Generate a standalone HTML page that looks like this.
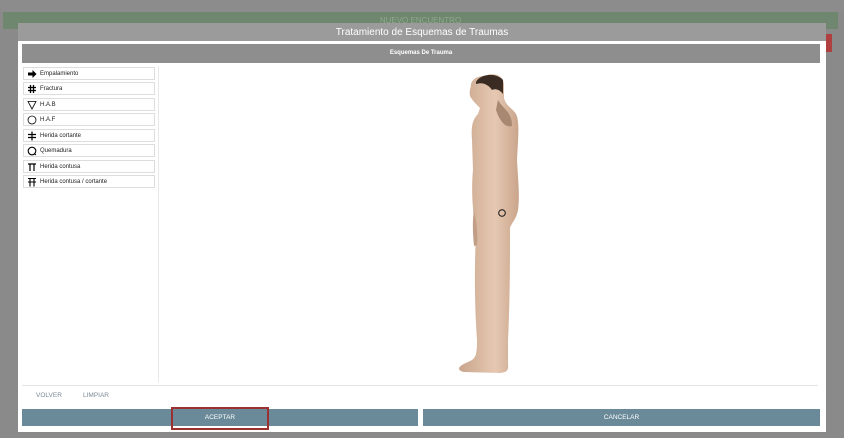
<!DOCTYPE html>
<html><head><meta charset="utf-8"><style>
*{margin:0;padding:0;box-sizing:border-box}
body{width:844px;height:438px;overflow:hidden;background:#8a8a8a;font-family:"Liberation Sans",sans-serif;position:relative}
.abs{position:absolute}
.item{position:absolute;left:23px;width:132px;height:13px;border:1px solid #ddd;background:#fff;font-size:6px;color:#222;display:flex;align-items:center;padding-left:16px}
.item svg{position:absolute;left:3px;top:1px}
.btn{position:absolute;top:409px;height:17px;background:#6a8a99;color:#fff;font-size:6.5px;text-align:center;line-height:17px}
</style></head><body>
<div class="abs" style="left:0;top:0;width:844px;height:12px;background:#8c8c8c"></div>
<div class="abs" style="left:3px;top:12px;width:835px;height:17px;background:#6e876e;color:#8ea88e;font-size:8px;text-align:center;line-height:17px">NUEVO ENCUENTRO</div>
<div class="abs" style="left:826px;top:34px;width:6px;height:18px;background:#b04040"></div>
<div class="abs" style="left:18px;top:23px;width:808px;height:409px;background:#fff"></div>
<div class="abs" style="left:18px;top:23px;width:808px;height:18px;background:#9b9b9b;color:#fff;font-size:10px;text-align:center;line-height:19px">Tratamiento de Esquemas de Traumas</div>
<div class="abs" style="left:22px;top:44px;width:798px;height:19px;background:#8e8e8e;color:#fff;font-size:6px;font-weight:bold;text-align:center;line-height:19px">Esquemas De Trauma</div>
<div class="abs" style="left:158px;top:66px;width:1px;height:316px;background:#e8e8e8"></div>
<div class="abs" style="left:22px;top:385px;width:796px;height:1px;background:#e4e4e4"></div>
<div class="item" style="top:67px"><svg width="10" height="10"><path d="M1 3.5h4.5V1L9.5 5 5.5 9V6.5H1z" fill="#000"/></svg>Empalamiento</div>
<div class="item" style="top:82px"><svg width="10" height="10"><path d="M3.5 1v8M6.5 1v8M1 3.5h8M1 6.5h8" stroke="#000" stroke-width="1.3"/></svg>Fractura</div>
<div class="item" style="top:98px"><svg width="10" height="10"><path d="M1 1.5h8L5 9z" fill="none" stroke="#000" stroke-width=".8"/></svg>H.A.B</div>
<div class="item" style="top:113px"><svg width="10" height="10"><circle cx="5" cy="5" r="4" fill="none" stroke="#000" stroke-width=".8"/></svg>H.A.F</div>
<div class="item" style="top:129px"><svg width="10" height="10"><path d="M5 .5v9M1 3.5h8M1 6.5h8" stroke="#000" stroke-width="1.2"/></svg>Herida cortante</div>
<div class="item" style="top:144px"><svg width="10" height="10"><circle cx="5" cy="5" r="3.8" fill="none" stroke="#000" stroke-width="1.1"/><path d="M7 7.5l2 1.5" stroke="#000"/></svg>Quemadura</div>
<div class="item" style="top:160px"><svg width="10" height="10"><path d="M1 2h8M3 2v7M7 2v7" stroke="#000" stroke-width="1.2"/></svg>Herida contusa</div>
<div class="item" style="top:175px"><svg width="10" height="10"><path d="M1 1.5h8M1 5h8M3 1.5v8M7 1.5v8" stroke="#000" stroke-width="1.1"/></svg>Herida contusa / cortante</div>
<svg class="abs" style="left:440px;top:70px" width="100" height="310">
<defs><linearGradient id="g" x1="0" x2="1"><stop offset="0" stop-color="#c9a58c"/><stop offset=".6" stop-color="#e6c8b2"/><stop offset="1" stop-color="#c9a48b"/></linearGradient></defs>
<path fill="url(#g)" d="M45 6 C52 2 63 4 64 14 L64 28 C66 36 72 38 76 44 C80 52 78 70 77 90 C78 110 80 125 78 140 C76 150 72 152 70 158 C70 190 70 230 68 270 L68 290 C68 298 70 302 60 303 L24 302 C16 300 18 296 28 292 C36 289 37 285 37 270 C35 240 34 210 36 160 L34 148 C33 140 31 120 33 100 L32 70 C31 58 32 50 38 44 L40 38 C36 34 32 30 30 26 C29 20 31 18 31 14 C33 8 38 6 45 6Z"/>
<path fill="#3a2c22" d="M36 12 C40 4 56 2 63 10 L63 24 C60 20 56 18 52 20 C48 14 42 12 36 14Z"/>
<path fill="#a88870" d="M58 30 C64 40 72 42 72 56 C66 58 60 52 56 40Z"/>
<path fill="#c29e86" d="M34 140 C36 150 38 160 37 175 L34 176 C33 165 32 152 34 140Z"/>
<circle cx="62" cy="143" r="3.3" fill="none" stroke="#111" stroke-width="1"/>
</svg>
<div class="abs" style="left:36px;top:392px;font-size:6.5px;color:#7a8a96">VOLVER</div>
<div class="abs" style="left:83px;top:392px;font-size:6.5px;color:#7a8a96">LIMPIAR</div>
<div class="btn" style="left:22px;width:396px">ACEPTAR</div>
<div class="btn" style="left:423px;width:397px">CANCELAR</div>
<div class="abs" style="left:171px;top:407px;width:98px;height:23px;border:2px solid #9b3030"></div>
</body></html>
